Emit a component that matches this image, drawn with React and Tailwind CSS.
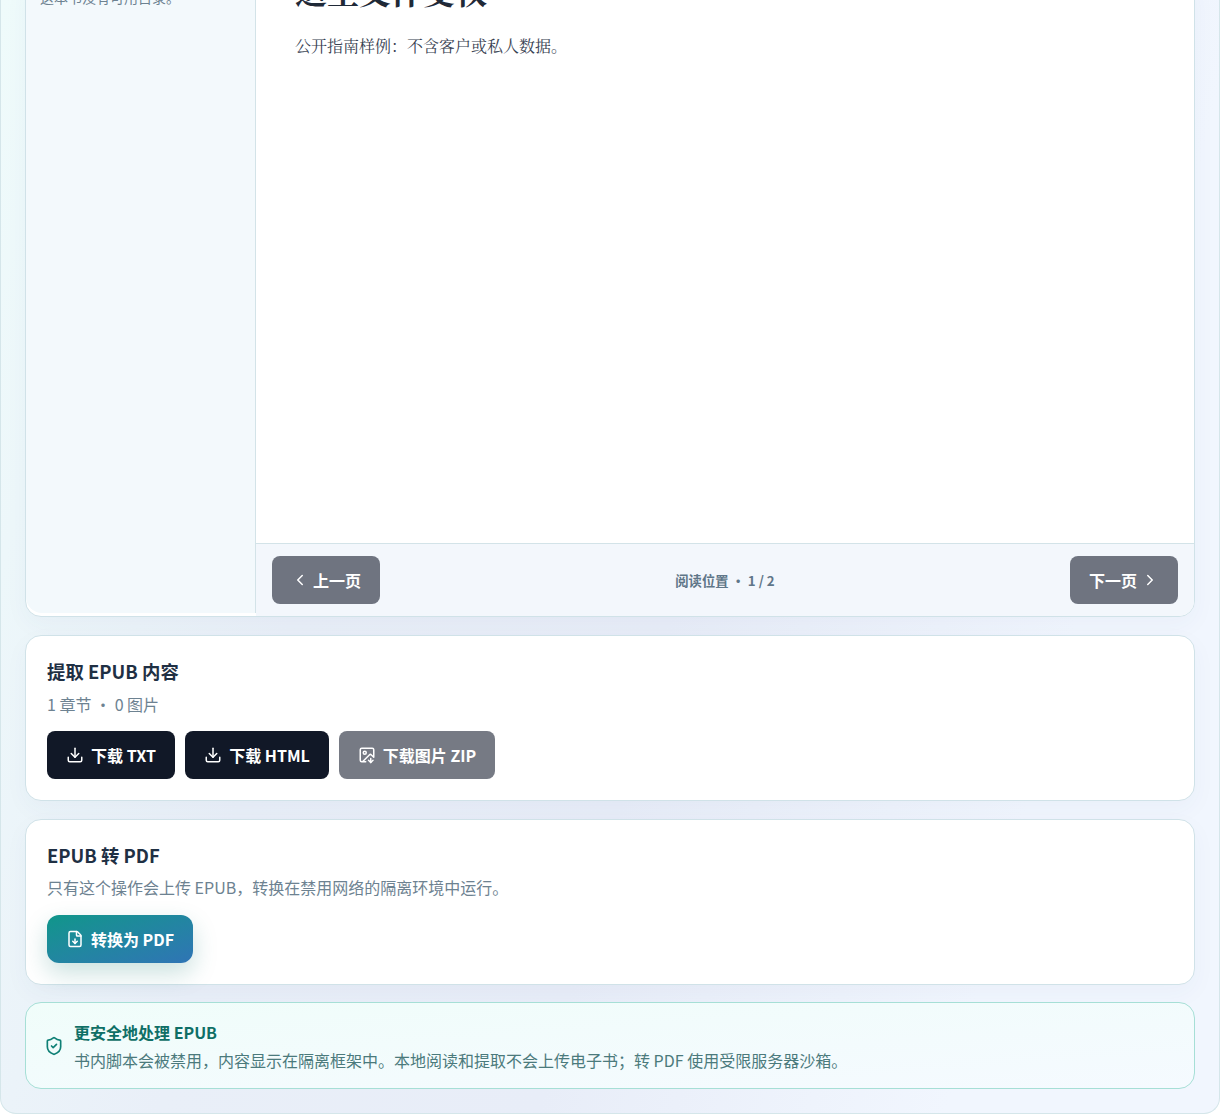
import React from 'react';
import { ChevronLeft, ChevronRight, Download, FileDown, ImageDown, ShieldCheck } from 'lucide-react';

const sans = 'font-["Noto_Sans_CJK_SC","Noto_Sans",sans-serif]';

const Button = ({ className = '', children }) => (
  <button className={`flex h-12 items-center justify-center rounded-lg text-base font-bold text-white ${className}`}>
    {children}
  </button>
);

const Card = ({ title, children, className = '' }) => (
  <section className={`rounded-2xl border border-[#d0e2e8] bg-white px-[21px] pt-[19px] shadow-[0_8px_24px_rgba(40,70,130,0.04)] ${className}`}>
    <h2 className="text-[18.4px] leading-[32px] font-semibold text-[#1f3044]">{title}</h2>
    {children}
  </section>
);

export default function App() {
  return (
    <div lang="zh-CN" className={`h-[1114px] overflow-hidden ${sans}`}>
      <main className="flex h-full flex-col rounded-b-2xl border border-t-0 border-[#d5e6ea] bg-[linear-gradient(105deg,#effbfb_0%,#e9eff8_30%,#e8edf8_55%,#f1f6fe_82%)] px-6">
        {/* reader, scrolled past its top */}
        <section className="-mt-[24px] flex h-[641px] shrink-0 flex-col overflow-hidden rounded-2xl border border-[#d0e2e8] bg-white shadow-[0_8px_24px_rgba(40,70,130,0.04)]">
          <div className="flex min-h-0 flex-1">
            <aside className="mb-[3px] w-[230px] shrink-0 rounded-bl-2xl border-r border-[#d3e3e8] bg-[#f3f9fc] px-[14px] pt-[10px] text-sm text-[#6d8291]">
              这本书没有可用目录。
            </aside>
            <div className="flex min-w-0 flex-1 flex-col">
              <article className='-ml-px flex-1 px-10 font-["Noto_Serif_CJK_SC","Liberation_Serif",serif] text-[#1f2937]'>
                <h1 className="text-[32px] leading-[26px] font-bold">这里文件受权</h1>
                <p className="mt-[30px] text-base leading-[26px] text-[#374151]">公开指南样例：不含客户或私人数据。</p>
              </article>
              <div className="flex h-[73px] shrink-0 items-center justify-between border-t border-[#d3e3e8] bg-[#f3f7fc] px-4">
                <Button className="w-[108px] gap-1 bg-[#6f7480]"><ChevronLeft size={18} />上一页</Button>
                <span className="mt-[2px] text-[13.3px] font-bold text-[#5f7688]">阅读位置 • 1 / 2</span>
                <Button className="w-[108px] gap-1 bg-[#6f7480]">下一页<ChevronRight size={18} /></Button>
              </div>
            </div>
          </div>
        </section>

        <Card title="提取 EPUB 内容" className="mt-[18px] h-[166px] shrink-0">
          <p className="text-base leading-[34px] text-[#6d8291]">1 章节 • 0 图片</p>
          <div className="mt-[10px] flex gap-[10px]">
            <Button className="w-[128px] gap-[7px] bg-[#111827]"><Download size={18} />下载 TXT</Button>
            <Button className="w-[144px] gap-[7px] bg-[#111827]"><Download size={18} />下载 HTML</Button>
            <Button className="w-[156px] gap-[7px] bg-[#767a84]"><ImageDown size={18} />下载图片 ZIP</Button>
          </div>
        </Card>

        <Card title="EPUB 转 PDF" className="mt-[18px] h-[166px] shrink-0">
          <p className="text-base leading-[32px] text-[#6d8291]">只有这个操作会上传 EPUB，转换在禁用网络的隔离环境中运行。</p>
          <Button className="mt-[12px] w-[146px] gap-[7px] rounded-xl bg-gradient-to-br from-[#0f968a] to-[#2f74b5] shadow-[0_10px_24px_rgba(15,118,110,0.22)]">
            <FileDown size={18} />转换为 PDF
          </Button>
        </Card>

        <section className="mt-[17px] flex h-[87px] shrink-0 items-center gap-[10px] rounded-2xl border border-[#a6dfd6] bg-gradient-to-br from-[#f0fdfa] to-[#f5faff] px-[18px]">
          <ShieldCheck size={20} className="shrink-0 text-[#0f8076]" />
          <div>
            <h3 className="text-base leading-[28px] font-semibold text-[#0f6f66]">更安全地处理 EPUB</h3>
            <p className="text-base leading-[28px] text-[#4b7a7c]">书内脚本会被禁用，内容显示在隔离框架中。本地阅读和提取不会上传电子书；转 PDF 使用受限服务器沙箱。</p>
          </div>
        </section>
      </main>
    </div>
  );
}
